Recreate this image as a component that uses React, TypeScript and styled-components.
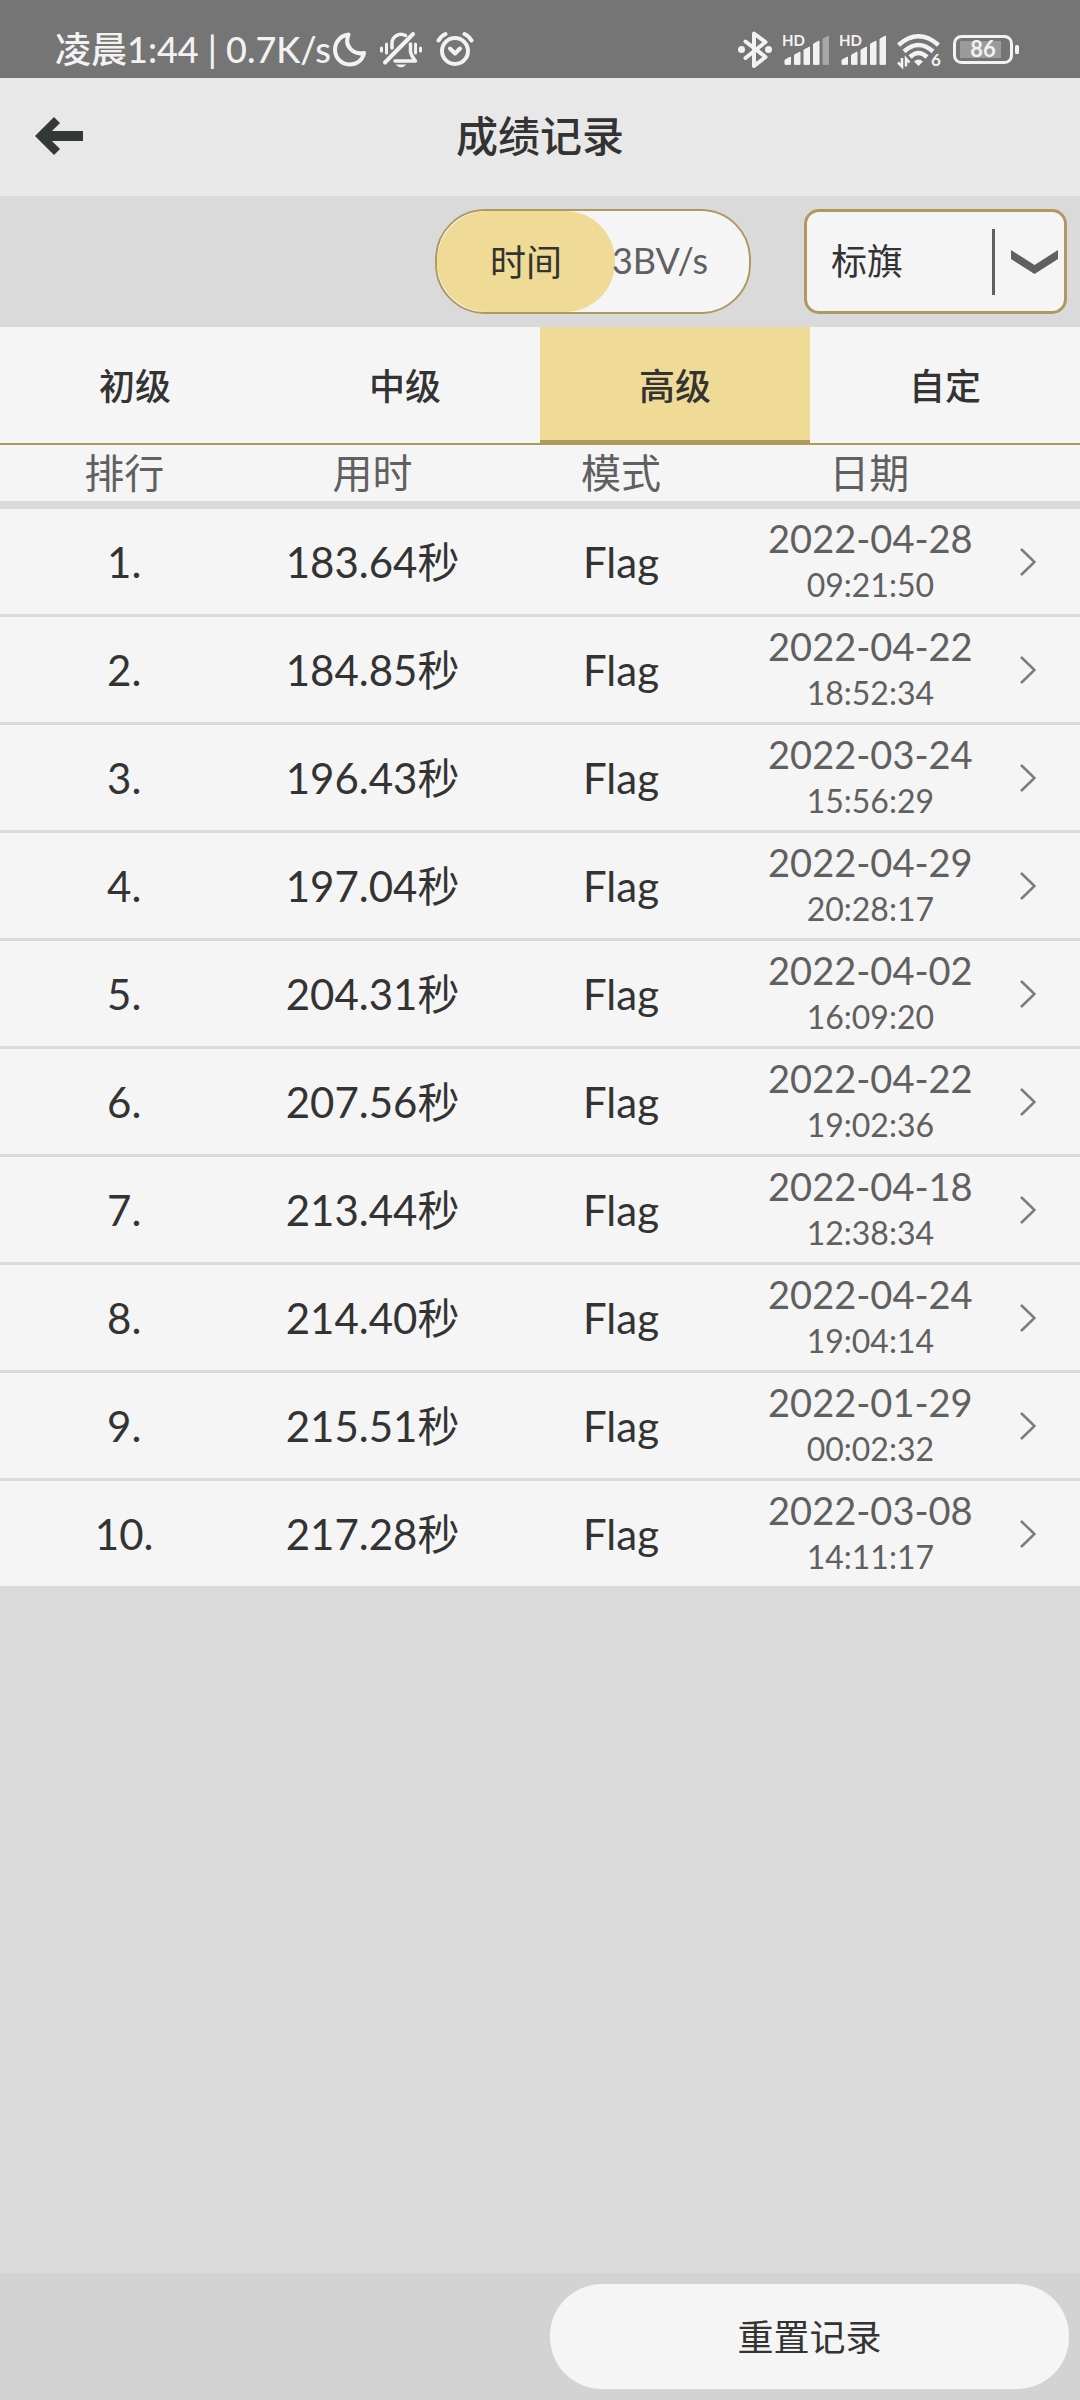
import React, { useState } from 'react';
import styled, { createGlobalStyle } from 'styled-components';

const color = {
  status: '#757575',
  header: '#e8e8e8',
  page: '#dadada',
  footer: '#d3d3d3',
  surface: '#f5f5f5',
  ink: '#333333',
  muted: '#606060',
  gold: '#efda96',
  goldLine: '#ae9a5e',
  statusInk: '#f2f2f2',
};

const GlobalStyle = createGlobalStyle`
  * { box-sizing: border-box; }
  body {
    margin: 0;
    background: ${color.page};
    color: ${color.ink};
    font-family: Lato, 'Noto Sans CJK SC', sans-serif;
  }
  button, select, input { font-family: inherit; color: inherit; margin: 0; }
`;

const Page = styled.div`
  min-height: 100vh;
  display: flex;
  flex-direction: column;
`;

const StatusBar = styled.div`
  height: 78px;
  padding: 22px 61px 0 55px;
  display: flex;
  justify-content: space-between;
  align-items: center;
  background: ${color.status};
  color: ${color.statusInk};
`;

const StatusGroup = styled.div<{ $gap: number }>`
  display: flex;
  align-items: center;
  gap: ${(p) => p.$gap}px;
`;

const Clock = styled.span`
  padding-bottom: 2px;
  font-size: 36px;
  line-height: 40px;
  font-weight: 500;
  white-space: nowrap;
  margin-right: -12px;
`;

const StatusIcon = styled.svg`
  display: block;
  height: 40px;
  fill: none;
  stroke: ${color.statusInk};
  stroke-width: 4;
  stroke-linecap: round;
  stroke-linejoin: round;

  text {
    fill: ${color.statusInk};
    stroke: none;
    font-family: Lato, sans-serif;
    font-weight: 700;
  }
`;

const Header = styled.header`
  height: 118px;
  padding: 0 32px 2px;
  display: grid;
  grid-template-columns: 54px 1fr 54px;
  align-items: center;
  background: ${color.header};
`;

const BackButton = styled.button`
  height: 56px;
  padding: 0;
  border: 0;
  background: none;
  display: grid;
  place-items: center;
`;

const Title = styled.h1`
  margin: 0;
  text-align: center;
  font-size: 42px;
  line-height: 60px;
  font-weight: 500;
`;

const Filters = styled.div`
  padding: 13px;
  display: flex;
  justify-content: flex-end;
  gap: 53px;
`;

const Toggle = styled.fieldset`
  margin: 0;
  padding: 0;
  height: 105px;
  width: 315px;
  display: flex;
  border: 2px solid ${color.goldLine};
  border-radius: 50px;
  background: ${color.surface};
  overflow: hidden;
`;

const ToggleOption = styled.label<{ $on: boolean }>`
  flex: 0 0 178px;
  display: grid;
  place-items: center;
  padding-bottom: 4px;
  border-radius: 50px;
  font-size: 36px;
  color: ${(p) => (p.$on ? color.ink : color.muted)};
  background: ${(p) => (p.$on ? color.gold : 'transparent')};

  & + & { margin-left: -44px; }
`;

const HiddenRadio = styled.input`
  position: absolute;
  opacity: 0;
  pointer-events: none;
`;

const SelectBox = styled.div`
  display: grid;
  width: 263px;
  height: 105px;

  > * { grid-area: 1 / 1; }
`;

const ModeSelect = styled.select`
  appearance: none;
  width: 100%;
  padding: 0 90px 2px 24px;
  border: 3px solid ${color.goldLine};
  border-radius: 15px;
  background: ${color.surface};
  font-size: 36px;
`;

const SelectMark = styled.svg`
  justify-self: end;
  align-self: center;
  margin-right: 8px;
  pointer-events: none;
`;

const Tabs = styled.div`
  display: grid;
  grid-template-columns: repeat(4, 1fr);
  height: 118px;
`;

const Tab = styled.button<{ $on: boolean }>`
  border: 0;
  border-bottom: ${(p) => (p.$on ? 5 : 2)}px solid ${color.goldLine};
  padding: ${(p) => (p.$on ? '1px 0 0' : '0 0 2px')};
  background: ${(p) => (p.$on ? color.gold : color.surface)};
  font-size: 36px;
  font-weight: 500;
`;

const Records = styled.table`
  width: 100%;
  table-layout: fixed;
  border-collapse: separate;
  border-spacing: 0;
  background: ${color.surface};
  text-align: center;
`;

const Column = styled.col<{ $width: string }>`
  width: ${(p) => p.$width};
`;

const HeadCell = styled.th`
  height: 64px;
  padding: 0;
  border-bottom: 8px solid ${color.page};
  font-size: 40px;
  line-height: 56px;
  font-weight: 400;
  color: ${color.muted};
`;

const Cell = styled.td`
  height: 108px;
  padding: 0;
  border-bottom: 3px solid ${color.page};
  font-size: 42px;
  line-height: 56px;

  tr:last-child > & {
    height: 105px;
    border-bottom: 0;
  }
`;

const DateCell = styled(Cell)`
  padding: 0 0 4px 2px;
`;

const DateText = styled.div`
  font-size: 38px;
  line-height: 50px;
  color: ${color.muted};
`;

const TimeText = styled.div`
  font-size: 32px;
  line-height: 44px;
  color: ${color.muted};
`;

const DetailButton = styled.button`
  display: block;
  width: 68px;
  height: 68px;
  padding: 0;
  border: 0;
  background: none;

  svg { display: block; margin: auto; }
`;

const Footer = styled.footer`
  margin-top: auto;
  padding: 11px;
  display: flex;
  justify-content: flex-end;
  background: ${color.footer};
`;

const ResetButton = styled.button`
  width: calc(50% - 10px);
  height: 105px;
  padding: 0 0 4px;
  border: 0;
  border-radius: 52px;
  background: ${color.surface};
  font-size: 36px;
`;

function MoonIcon() {
  return (
    <StatusIcon width="33" viewBox="0 0 33 40" aria-hidden="true">
      <path d="M15.500 4.500C7.500 5.500 2 12 2 19.500 2 28 8.500 34.500 16.500 34.500c7.500 0 13-4.500 14.500-11.500-10 2-20.500-6-15.500-18.500z" />
    </StatusIcon>
  );
}

function MutedBellIcon() {
  return (
    <StatusIcon width="42" viewBox="0 0 42 40" aria-hidden="true">
      <path d="M1.500 18v3M6.500 14v9M35.500 14v9M40.500 18v3" strokeWidth="3" />
      <path d="M5 32.500 33 4" />
      <path d="M12 18v-4a9 9 0 0 1 13.500-8.500M30.500 14v7.500q.5 4 5 9.500H15" strokeWidth="3.500" />
      <path d="M15.500 34.500h11q-5.500 5.500-11 0z" fill={color.statusInk} stroke="none" />
    </StatusIcon>
  );
}

function AlarmIcon() {
  return (
    <StatusIcon width="38" viewBox="0 0 38 40" aria-hidden="true">
      <circle cx="19" cy="21" r="13" />
      <path d="M14 18.500l5 5 5-5" />
      <path d="M2.500 10.500Q5 6 9.500 4M35.500 10.500Q33 6 28.500 4" />
    </StatusIcon>
  );
}

function BluetoothIcon() {
  return (
    <StatusIcon width="34" viewBox="0 0 34 40" aria-hidden="true">
      <path d="M7.500 11.500l20 15.500-11.500 9V3.500l11.500 8.500-20 16" />
      <circle cx="3.500" cy="19.500" r="3.500" fill={color.statusInk} stroke="none" />
      <circle cx="30.500" cy="19.500" r="3.500" fill={color.statusInk} stroke="none" />
    </StatusIcon>
  );
}

function SignalIcon({ level }: { level: number }) {
  const tops = [26, 21, 16, 10, 5];
  return (
    <StatusIcon width="46" viewBox="0 0 46 40" aria-hidden="true">
      <text x="-1" y="16" fontSize="15">HD</text>
      {tops.map((top, i) => {
        const x = 2 + i * 9.5;
        return (
          <path
            key={top}
            d={`M${x} 34V${top + 4}L${x + 5.5} ${top + 1}V34z`}
            fill={color.statusInk}
            stroke={color.statusInk}
            strokeWidth="1"
            opacity={i < level ? 1 : 0.4}
          />
        );
      })}
    </StatusIcon>
  );
}

function WifiIcon() {
  return (
    <StatusIcon width="45" viewBox="0 0 45 40" aria-hidden="true">
      <g strokeWidth="4.500" strokeLinecap="butt">
        <path d="M1.500 15Q21.500-2.500 41.500 15" />
        <path d="M7 21.500Q21.500 8.500 36 21.500" />
        <path d="M13 27Q21.500 19 30 27" />
      </g>
      <path d="M17 31.500q4.500-4 9 0l-4.500 4.500z" fill={color.statusInk} stroke="none" />
      <path d="M5 28v8.500L1 32.500M9 36.500V28.500l3.500 4" strokeWidth="2.500" strokeLinecap="butt" strokeLinejoin="miter" />
      <text x="34" y="36" fontSize="17">6</text>
    </StatusIcon>
  );
}

function BatteryIcon() {
  return (
    <StatusIcon width="66" viewBox="0 0 66 40" aria-hidden="true">
      <rect x="1.500" y="6.500" width="57" height="26" rx="7" strokeWidth="3" />
      <rect x="7" y="11" width="41" height="17" fill="#9b9b9b" stroke="none" />
      <rect x="62" y="15" width="4" height="9" rx="1.500" fill={color.statusInk} stroke="none" />
      <text x="30" y="27" fontSize="22" textAnchor="middle">86</text>
    </StatusIcon>
  );
}

const records = [
  ['183.64', '2022-04-28', '09:21:50'],
  ['184.85', '2022-04-22', '18:52:34'],
  ['196.43', '2022-03-24', '15:56:29'],
  ['197.04', '2022-04-29', '20:28:17'],
  ['204.31', '2022-04-02', '16:09:20'],
  ['207.56', '2022-04-22', '19:02:36'],
  ['213.44', '2022-04-18', '12:38:34'],
  ['214.40', '2022-04-24', '19:04:14'],
  ['215.51', '2022-01-29', '00:02:32'],
  ['217.28', '2022-03-08', '14:11:17'],
];

const levels = ['初级', '中级', '高级', '自定'];
const metrics = ['时间', '3BV/s'];
const headings = ['排行', '用时', '模式', '日期'];

export default function App() {
  const [level, setLevel] = useState('高级');
  const [metric, setMetric] = useState('时间');

  return (
    <Page>
      <GlobalStyle />
      <StatusBar>
        <StatusGroup $gap={14}>
          <Clock>凌晨1:44 | 0.7K/s</Clock>
          <MoonIcon />
          <MutedBellIcon />
          <AlarmIcon />
        </StatusGroup>
        <StatusGroup $gap={11}>
          <BluetoothIcon />
          <SignalIcon level={4} />
          <SignalIcon level={5} />
          <WifiIcon />
          <BatteryIcon />
        </StatusGroup>
      </StatusBar>

      <Header>
        <BackButton aria-label="返回">
          <svg width="48" height="38" viewBox="0 0 48 38" aria-hidden="true">
            <path d="M0 19 19 0l6 6-8 8h31v10H17l8 8-6 6z" fill="#333839" />
          </svg>
        </BackButton>
        <Title>成绩记录</Title>
      </Header>

      <main>
        <Filters>
          <Toggle aria-label="排序">
            {metrics.map((m) => (
              <ToggleOption key={m} $on={m === metric}>
                <HiddenRadio type="radio" name="metric" checked={m === metric} onChange={() => setMetric(m)} />
                {m}
              </ToggleOption>
            ))}
          </Toggle>
          <SelectBox>
            <ModeSelect aria-label="模式">
              <option>标旗</option>
            </ModeSelect>
            <SelectMark width="67" height="66" viewBox="0 0 67 66" aria-hidden="true">
              <path d="M0 0h3v66H0zM19 21l23.500 15L66 21v9L42.500 45 19 30z" fill={color.muted} />
            </SelectMark>
          </SelectBox>
        </Filters>

        <Tabs role="tablist">
          {levels.map((l) => (
            <Tab key={l} role="tab" aria-selected={l === level} $on={l === level} onClick={() => setLevel(l)}>
              {l}
            </Tab>
          ))}
        </Tabs>

        <Records>
          <colgroup>
            {headings.map((h) => (
              <Column key={h} $width="23%" />
            ))}
            <Column $width="8%" />
          </colgroup>
          <thead>
            <tr>
              {headings.map((h) => (
                <HeadCell key={h} scope="col">{h}</HeadCell>
              ))}
              <HeadCell as="td" />
            </tr>
          </thead>
          <tbody>
            {records.map(([time, date, clock], i) => (
              <tr key={time}>
                <Cell>{i + 1}.</Cell>
                <Cell>{time}秒</Cell>
                <Cell>Flag</Cell>
                <DateCell>
                  <DateText>{date}</DateText>
                  <TimeText>{clock}</TimeText>
                </DateCell>
                <Cell>
                  <DetailButton aria-label="详情">
                    <svg width="16" height="28" viewBox="0 0 16 28" aria-hidden="true">
                      <path d="M1 1l13.500 13L1 27" fill="none" stroke="#7c7c7c" strokeWidth="2.500" />
                    </svg>
                  </DetailButton>
                </Cell>
              </tr>
            ))}
          </tbody>
        </Records>
      </main>

      <Footer>
        <ResetButton>重置记录</ResetButton>
      </Footer>
    </Page>
  );
}
